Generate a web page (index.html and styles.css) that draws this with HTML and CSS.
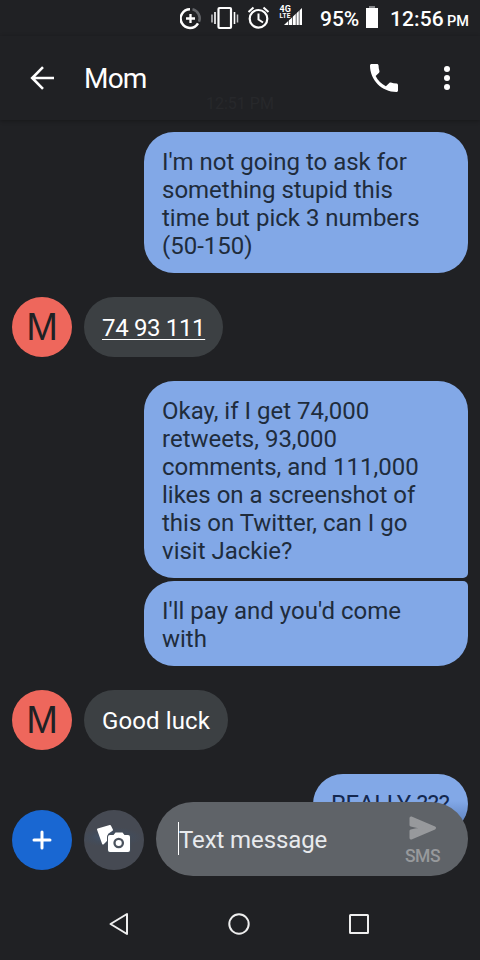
FILE: index.html
```html
<!DOCTYPE html>
<html lang="en">
<head>
    <meta charset="UTF-8">
    <meta name="viewport" content="width=device-width, initial-scale=1.0">
    <title>Messages - Mom</title>
    <link rel="stylesheet" href="styles.css">
</head>
<body>
    <div class="phone">
        <div class="status-bar">
            <svg class="status-icons" width="130" height="36" viewBox="0 0 130 36">
                <!-- data saver -->
                <g fill="none" stroke="#fff" stroke-width="2.5">
                    <path d="M10 9.3a9.3 9.3 0 1 0 8 14"/>
                    <path d="M12.5 9.3a9.3 9.3 0 0 1 6.5 12.5" stroke="#626468"/>
                    <path d="M10.5 14v9M6 18.5h9" stroke-width="2.3"/>
                </g>
                <!-- vibrate -->
                <g fill="none" stroke="#fff" stroke-width="2.2">
                    <rect x="38.500" y="8" width="12.5" height="20" rx="1"/>
                    <path d="M35 12v12M54.500 12v12" stroke-width="1.6"/>
                    <path d="M32 14.5v8M57.500 14.5v8" stroke="#c4c5c7" stroke-width="1.5"/>
                </g>
                <!-- alarm -->
                <g fill="none" stroke="#fff" stroke-width="2.2">
                    <circle cx="78.5" cy="18.8" r="8.8"/>
                    <path d="M68.5 12l5-4.5M88.5 12l-5-4.5M78.5 13.5v6l4.5 3" stroke-width="2"/>
                </g>
                <!-- signal -->
                <path d="M104 25l18-17v17z" fill="#fff"/>
                <path d="M108.5 8v17M112.5 8v17M116.2 8v17M119.2 8v17" stroke="#202124" stroke-width=".7"/>
                <text class="network" x="99.5" y="12" textLength="11.5">4G</text>
                <text class="network lte" x="99.5" y="18.2" textLength="11">LTE</text>
            </svg>
            <span class="battery-level">95%</span>
            <svg class="battery" width="12" height="22" viewBox="0 0 12 22">
                <path d="M3 0h6v2H3z" fill="#86878a"/>
                <path d="M0 2h12v20H0z" fill="#fff"/>
            </svg>
            <span class="clock">12:56</span>
            <span class="meridiem">PM</span>
        </div>

        <header class="header">
            <svg class="back" width="24" height="24" viewBox="0 0 24 24">
                <path d="M13 1.2L2.2 12 13 22.8M2.5 12H24" fill="none" stroke="#fff" stroke-width="2.6"/>
            </svg>
            <h1 class="contact">Mom</h1>
            <svg class="call" width="28" height="28" viewBox="3 3 18 18">
                <path d="M6.62 10.79c1.44 2.83 3.76 5.14 6.59 6.59l2.2-2.2c.27-.27.67-.36 1.02-.24 1.12.37 2.33.57 3.57.57.55 0 1 .45 1 1V20c0 .55-.45 1-1 1-9.39 0-17-7.61-17-17 0-.55.45-1 1-1h3.5c.55 0 1 .45 1 1 0 1.25.2 2.45.57 3.57.11.35.03.74-.25 1.02l-2.2 2.2z" fill="#fff"/>
            </svg>
            <svg class="more" width="6" height="24" viewBox="0 0 6 24">
                <circle cx="3" cy="3" r="3" fill="#fff"/>
                <circle cx="3" cy="12" r="3" fill="#fff"/>
                <circle cx="3" cy="21" r="3" fill="#fff"/>
            </svg>
            <span class="timestamp">12:51 PM</span>
        </header>

        <main class="messages">
            <div class="sent-group">
                <div class="bubble sent">I'm not going to ask for<br>something stupid this<br>time but pick 3 numbers<br>(50-150)</div>
            </div>
            <div class="received-row">
                <div class="avatar">M</div>
                <div class="bubble received"><span class="link">74 93 111</span></div>
            </div>
            <div class="sent-group">
                <div class="bubble sent first">Okay, if I get 74,000<br>retweets, 93,000<br>comments, and 111,000<br>likes on a screenshot of<br>this on Twitter, can I go<br>visit Jackie?</div>
                <div class="bubble sent last">I'll pay and you'd come<br>with</div>
            </div>
            <div class="received-row">
                <div class="avatar">M</div>
                <div class="bubble received luck">Good luck</div>
            </div>
            <div class="sent-group">
                <div class="bubble sent short">REALLY ???</div>
            </div>
        </main>

        <div class="composer">
            <div class="round-button add">
                <svg width="20" height="20" viewBox="0 0 20 20">
                    <path d="M10 2v16M2 10h16" stroke="#fff" stroke-width="3" stroke-linecap="round"/>
                </svg>
            </div>
            <div class="round-button gallery">
                <svg width="60" height="60" viewBox="0 0 60 60">
                    <path d="M14 19.5l12-3.500 2 4-5 3.500v6l-4 4z" fill="#fff" stroke="#fff" stroke-width="2" stroke-linejoin="round"/>
                    <path d="M26 25h3.5l2-2.500h7L40.500 25H44q2 0 2 2v13q0 2-2 2H26q-2 0-2-2V27q0-2 2-2z" fill="#fff" stroke="#464e59" stroke-width="2" paint-order="stroke"/>
                    <circle cx="34.7" cy="33" r="4.200" fill="none" stroke="#4b535e" stroke-width="2.300"/>
                </svg>
            </div>
            <div class="text-field">
                <span class="caret"></span>
                <span class="placeholder">Text message</span>
                <div class="send">
                    <svg width="28" height="24" viewBox="0 0 28 24">
                        <path d="M2 2l23.5 10L2 22v-7l13-3L2 9z" fill="#97999c" stroke="#97999c" stroke-width="3" stroke-linejoin="round"/>
                    </svg>
                    <span>SMS</span>
                </div>
            </div>
        </div>

        <nav class="nav-bar">
            <svg width="20" height="24" viewBox="0 0 20 24">
                <path d="M18 2v20L1.5 12z" fill="none" stroke="#eee" stroke-width="2" stroke-linejoin="round"/>
            </svg>
            <svg width="22" height="22" viewBox="0 0 22 22">
                <circle cx="11" cy="11" r="9.7" fill="none" stroke="#eee" stroke-width="2"/>
            </svg>
            <svg width="20" height="20" viewBox="0 0 20 20">
                <rect x="1" y="1" width="18" height="18" rx=".5" fill="none" stroke="#eee" stroke-width="2"/>
            </svg>
        </nav>
    </div>
</body>
</html>
```
FILE: styles.css
```css
* {
    box-sizing: border-box;
}

body {
    margin: 0;
    background-color: #202124;
    font-family: Roboto, Arial, sans-serif;
    color: #fff;
}

svg {
    display: block;
    flex-shrink: 0;
}

.phone {
    position: relative;
    display: flex;
    flex-direction: column;
    width: 480px;
    height: 960px;
    overflow: hidden;
    background-color: #202124;
}

.status-bar {
    display: flex;
    align-items: center;
    height: 36px;
    padding-left: 180px;
    font-size: 21px;
    font-weight: 500;
    white-space: nowrap;
}

.network {
    font-size: 9px;
    font-weight: 700;
    fill: #fff;
    stroke: #202124;
    stroke-width: 1px;
    paint-order: stroke;
}

.lte {
    font-size: 6.5px;
}

.battery-level {
    width: 46px;
    margin-left: 10px;
    padding-top: 2px;
}

.battery {
    margin-bottom: 2px;
}

.clock {
    width: 57px;
    margin-left: 12px;
    padding-top: 2px;
    letter-spacing: 0.1px;
}

.meridiem {
    padding-top: 6px;
    font-size: 14.5px;
}

.header {
    position: relative;
    display: flex;
    align-items: center;
    height: 84px;
    padding: 0 30px;
    box-shadow: 0 1px 4px rgba(0, 0, 0, 0.3);
}

.contact {
    flex: 1;
    margin: 0 0 0 30px;
    font-size: 28px;
    font-weight: 400;
    letter-spacing: -0.8px;
}

.more {
    margin-left: 46px;
}

/* faded label of the day separator scrolled under the header */
.timestamp {
    position: absolute;
    left: 206px;
    top: 58px;
    font-size: 16px;
    color: #27282b;
}

.messages {
    display: flex;
    flex-direction: column;
    gap: 24px;
    flex: 1;
    min-height: 0;
    padding: 12px 12px 0;
    overflow: hidden;
}

.sent-group {
    display: flex;
    flex-direction: column;
    align-items: flex-end;
    gap: 3px;
}

.received-row {
    display: flex;
    gap: 12px;
}

.bubble {
    padding: 16px 18px 13px;
    border-radius: 30px;
    font-size: 24px;
    line-height: 28px;
    white-space: nowrap;
}

.sent {
    width: 324px;
    background-color: #82a8e7;
    color: #202c3c;
}

.first {
    border-bottom-right-radius: 5px;
}

.last {
    border-top-right-radius: 5px;
}

.short {
    width: 155px;
    height: 60px;
    background: linear-gradient(#82a8e7 45%, #5c80bd 85%);
    color: #142850;
    letter-spacing: -0.3px;
}

.received {
    height: 60px;
    padding-top: 17px;
    background-color: #3c4043;
}

.luck {
    letter-spacing: 0.1px;
}

.link {
    letter-spacing: -0.35px;
    text-decoration: underline;
    text-decoration-thickness: 1px;
    text-underline-offset: 3px;
}

.avatar {
    width: 60px;
    height: 60px;
    border-radius: 50%;
    background-color: #ee675c;
    color: #202124;
    font-family: "Liberation Sans", Arial, sans-serif;
    font-size: 38px;
    line-height: 61px;
    text-align: center;
}

.composer {
    position: absolute;
    left: 12px;
    right: 12px;
    bottom: 84px;
    display: flex;
    align-items: flex-end;
    gap: 12px;
}

.round-button {
    display: flex;
    align-items: center;
    justify-content: center;
    width: 60px;
    height: 60px;
    margin-bottom: 6px;
    border-radius: 50%;
}

.add {
    background-color: #1967d2;
}

.gallery {
    background: radial-gradient(ellipse 32px 10px at 45% 45%, #435a75, #434c5a 60%, #464a53);
}

.text-field {
    display: flex;
    align-items: center;
    flex: 1;
    height: 74px;
    padding: 0 28px 0 22px;
    border-radius: 37px;
    background-color: #5f6368;
}

.caret {
    width: 1px;
    height: 33px;
    margin-bottom: 1px;
    background-color: #fff;
}

.placeholder {
    flex: 1;
    padding-top: 2px;
    font-size: 24px;
    letter-spacing: -0.1px;
    color: #e8eaed;
    white-space: nowrap;
}

.send {
    display: flex;
    flex-direction: column;
    align-items: center;
    gap: 6px;
    padding-top: 4px;
    font-size: 17.5px;
    line-height: 20px;
    font-weight: 500;
    letter-spacing: -0.5px;
    color: #97999c;
}

.nav-bar {
    display: flex;
    align-items: center;
    justify-content: center;
    gap: 99px;
    height: 72px;
    padding-right: 2px;
    background-color: #202124;
}
```
